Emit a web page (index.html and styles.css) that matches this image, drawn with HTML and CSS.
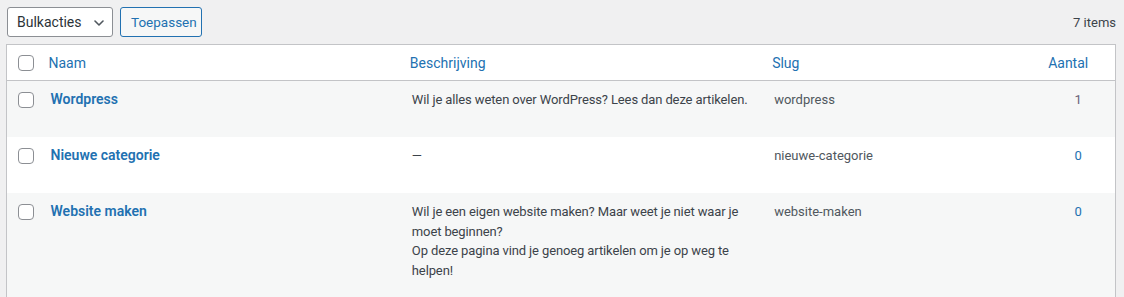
FILE: index.html
```html
<!DOCTYPE html>
<html lang="nl">
<head>
<meta charset="utf-8">
<title>Categorieën</title>
<link rel="stylesheet" href="styles.css">
</head>
<body>
<div class="wrap">
  <div class="tablenav">
    <div class="bulk">
      <div class="select">
        <span>Bulkacties</span>
        <svg class="chev" width="10" height="6" viewBox="0 0 10 6"><path d="M1 1l4 4 4-4" fill="none" stroke="#50575e" stroke-width="1.6" stroke-linecap="round" stroke-linejoin="round"/></svg>
      </div>
      <button class="btn">Toepassen</button>
    </div>
    <div class="count">7 items</div>
  </div>
  <table class="list">
    <colgroup>
      <col class="c-check"><col class="c-name"><col class="c-desc"><col class="c-slug"><col class="c-posts">
    </colgroup>
    <thead>
      <tr>
        <th class="check"><span class="cb"></span></th>
        <th class="h-name"><a>Naam</a></th>
        <th class="h-desc"><a>Beschrijving</a></th>
        <th class="h-slug"><a>Slug</a></th>
        <th class="h-posts"><a>Aantal</a></th>
      </tr>
    </thead>
    <tbody>
      <tr class="alt">
        <td class="check"><span class="cb"></span></td>
        <td class="name"><a>Wordpress</a><div class="actions"></div></td>
        <td class="desc"><p>Wil je alles weten over WordPress? Lees dan deze artikelen.</p></td>
        <td class="slug">wordpress</td>
        <td class="posts"><a class="visited">1</a></td>
      </tr>
      <tr>
        <td class="check"><span class="cb"></span></td>
        <td class="name"><a>Nieuwe categorie</a><div class="actions"></div></td>
        <td class="desc"><p>—</p></td>
        <td class="slug">nieuwe-categorie</td>
        <td class="posts"><a>0</a></td>
      </tr>
      <tr class="alt">
        <td class="check"><span class="cb"></span></td>
        <td class="name"><a>Website maken</a><div class="actions"></div></td>
        <td class="desc"><p>Wil je een eigen website maken? Maar weet je niet waar je moet beginnen?<br>Op deze pagina vind je genoeg artikelen om je op weg te helpen!</p></td>
        <td class="slug">website-maken</td>
        <td class="posts"><a>0</a></td>
      </tr>
    </tbody>
  </table>
</div>
</body>
</html>
```

FILE: styles.css
```css
html, body {
  margin: 0;
  background: #f0f0f1;
  font-family: "Segoe UI", Roboto, "Noto Sans", sans-serif;
  font-size: 13px;
  color: #3c434a;
}
.wrap {
  padding: 7px 8px 0 6px;
}
.tablenav {
  display: flex;
  justify-content: space-between;
  align-items: center;
  height: 30px;
  margin-bottom: 7px;
}
.bulk {
  display: flex;
  gap: 7px;
  margin-left: 1px;
}
.select {
  box-sizing: border-box;
  width: 106px;
  height: 30px;
  border: 1px solid #8c8f94;
  border-radius: 3px;
  background: #fff;
  display: flex;
  align-items: center;
  justify-content: space-between;
  padding: 0 8px 0 9px;
  font-size: 14px;
  color: #2c3338;
}
.chev { margin-top: 1px; }
.btn {
  box-sizing: border-box;
  height: 30px;
  width: 82px;
  border: 1px solid #2271b1;
  border-radius: 3px;
  background: #f6f7f7;
  color: #2271b1;
  font-family: inherit;
  font-size: 13.5px;
  padding: 0 10px;
  margin: 0;
}
.count {
  color: #3c434a;
  font-size: 13px;
  padding-top: 1px;
}
.list {
  width: 1110px;
  border-collapse: collapse;
  table-layout: fixed;
  background: #fff;
  border: 1px solid #c3c4c7;
}
.c-check { width: 34px; }
.c-name { width: 361px; }
.c-desc { width: 362px; }
.c-slug { width: 277px; }
.c-posts { width: 74px; }
thead th {
  height: 35px;
  padding: 0;
  text-align: left;
  font-weight: 400;
  font-size: 14px;
  border-bottom: 1px solid #c3c4c7;
  vertical-align: middle;
}
thead th a {
  color: #2271b1;
  display: block;
  padding: 0 8px;
  line-height: 19px;
  margin-top: 1px;
}
thead th.h-posts a {
  text-align: center;
  padding: 0 20px 0 0;
}
thead th.check {
  padding-left: 11px;
}
.cb {
  display: block;
  box-sizing: border-box;
  width: 16px;
  height: 16px;
  border: 1px solid #8c8f94;
  border-radius: 4px;
  background: #fff;
}
thead .cb { margin-top: 1px; }
tbody tr.alt { background: #f6f7f7; }
tbody td {
  padding: 8px 10px;
  vertical-align: top;
  line-height: 19.5px;
}
tbody td.check {
  padding: 11px 0 0 11px;
}
tbody td.name { padding-top: 9px; }
td.name a {
  color: #2271b1;
  font-weight: 600;
  font-size: 14px;
}
td.name .actions { height: 19.5px; }
td.desc p {
  margin: 1px 0 13px;
  letter-spacing: -0.12px;
}
td.slug { color: #50575e; padding-top: 9px; }
td.posts {
  text-align: center;
  padding: 9px 0 0;
}
td.posts a { color: #2271b1; }
td.posts a.visited { color: #6b6478; }
```
